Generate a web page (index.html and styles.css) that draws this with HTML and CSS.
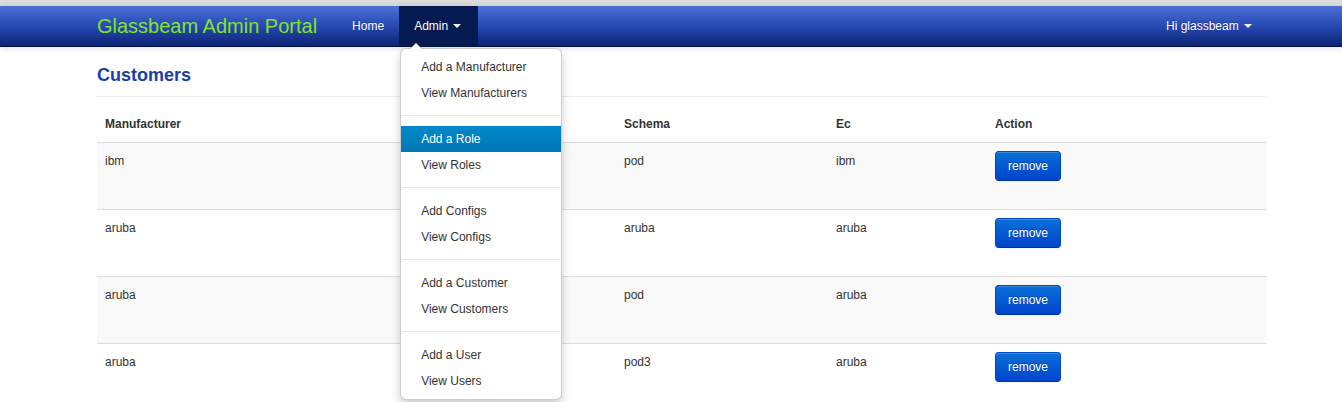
FILE: index.html
```html
<!DOCTYPE html>
<html>
<head>
<meta charset="utf-8">
<title>Glassbeam Admin Portal</title>
<link rel="stylesheet" href="styles.css">
</head>
<body>
<div class="topstrip"></div>
<div class="navbar">
  <div class="container nav-inner">
    <a class="brand">Glassbeam Admin Portal</a>
    <ul class="nav">
      <li><a>Home</a></li>
      <li class="dropdown open">
        <a class="active">Admin <b class="caret"></b></a>
        <ul class="dropdown-menu">
          <li><a>Add a Manufacturer</a></li>
          <li><a>View Manufacturers</a></li>
          <li class="divider"></li>
          <li><a class="hl">Add a Role</a></li>
          <li><a>View Roles</a></li>
          <li class="divider"></li>
          <li><a>Add Configs</a></li>
          <li><a>View Configs</a></li>
          <li class="divider"></li>
          <li><a>Add a Customer</a></li>
          <li><a>View Customers</a></li>
          <li class="divider"></li>
          <li><a>Add a User</a></li>
          <li><a>View Users</a></li>
        </ul>
      </li>
    </ul>
    <ul class="nav nav-right">
      <li><a>Hi glassbeam <b class="caret"></b></a></li>
    </ul>
  </div>
</div>
<div class="container">
  <div class="page-header"><h3>Customers</h3></div>
  <table class="table">
    <colgroup>
      <col class="c1"><col class="c2"><col class="c3"><col class="c4"><col class="c5">
    </colgroup>
    <thead>
      <tr><th>Manufacturer</th><th></th><th>Schema</th><th>Ec</th><th>Action</th></tr>
    </thead>
    <tbody>
      <tr class="odd"><td>ibm</td><td></td><td>pod</td><td>ibm</td><td><form class="f"><button type="button" class="btn">remove</button></form></td></tr>
      <tr><td>aruba</td><td></td><td>aruba</td><td>aruba</td><td><form class="f"><button type="button" class="btn">remove</button></form></td></tr>
      <tr class="odd"><td>aruba</td><td></td><td>pod</td><td>aruba</td><td><form class="f"><button type="button" class="btn">remove</button></form></td></tr>
      <tr><td>aruba</td><td></td><td>pod3</td><td>aruba</td><td><form class="f"><button type="button" class="btn">remove</button></form></td></tr>
    </tbody>
  </table>
</div>
</body>
</html>
```
FILE: styles.css
```css
html, body {
  margin: 0;
  padding: 0;
  background: #fff;
  font-family: "Liberation Sans", Arial, sans-serif;
  font-size: 12px;
  line-height: 20px;
  color: #333;
  overflow: hidden;
}
.topstrip {
  height: 6px;
  background: #dcdcdc;
}
.container {
  width: 1170px;
  margin-left: 97px;
}
.navbar {
  background: linear-gradient(to bottom, #4a70d6 0%, #2749b2 50%, #0c2474 100%);
  box-shadow: 0 1px 6px rgba(0,0,0,0.15);
  border-bottom: 1px solid #061445;
  box-sizing: border-box;
  height: 41px;
  position: relative;
  z-index: 5;
}
.nav-inner {
  display: flex;
  height: 40px;
}
.brand {
  display: block;
  font-size: 20px;
  line-height: 20px;
  padding: 10px 20px 10px 0;
  color: #84e32c;
}
.nav {
  list-style: none;
  margin: 0;
  padding: 0;
  display: flex;
}
.nav > li {
  position: relative;
}
.nav > li > a {
  display: block;
  padding: 10px 15px;
  line-height: 20px;
  color: #fff;
  text-shadow: 0 -1px 0 rgba(0,0,0,0.25);
}
.nav > li > a.active {
  background: #061a52;
  padding-right: 17px;
}
.nav-right {
  margin-left: auto;
}
.caret {
  display: inline-block;
  width: 0;
  height: 0;
  vertical-align: top;
  margin-top: 8px;
  margin-left: 2px;
  border-top: 4px solid #fff;
  border-left: 4px solid transparent;
  border-right: 4px solid transparent;
}
.dropdown-menu {
  position: absolute;
  top: 100%;
  left: 1px;
  margin: 2px 0 0;
  padding: 5px 0;
  list-style: none;
  width: 160px;
  background: #fff;
  border: 1px solid rgba(0,0,0,0.2);
  border-radius: 6px;
  box-shadow: 0 5px 10px rgba(0,0,0,0.2);
  z-index: 10;
}
.dropdown-menu:before {
  content: "";
  position: absolute;
  top: -7px;
  left: 8px;
  border-left: 7px solid transparent;
  border-right: 7px solid transparent;
  border-bottom: 7px solid rgba(0,0,0,0.2);
}
.dropdown-menu:after {
  content: "";
  position: absolute;
  top: -6px;
  left: 9px;
  border-left: 6px solid transparent;
  border-right: 6px solid transparent;
  border-bottom: 6px solid #fff;
}
.dropdown-menu li a {
  display: block;
  padding: 3px 20px;
  line-height: 20px;
  color: #333;
  white-space: nowrap;
}
.dropdown-menu li a.hl {
  color: #fff;
  background: linear-gradient(to bottom, #0088cc, #0077b3);
}
.dropdown-menu .divider {
  height: 1px;
  margin: 9px 1px;
  background: #e5e5e5;
  border-bottom: 1px solid #fff;
}
.page-header {
  margin-top: 18px;
  padding-bottom: 11px;
  border-bottom: 1px solid #eee;
}
.page-header h3 {
  margin: 0;
  font-size: 18px;
  line-height: 20px;
  font-weight: bold;
  color: #1b3ea6;
}
.table {
  margin-top: 9px;
  width: 1170px;
  table-layout: fixed;
  border-collapse: collapse;
  border-spacing: 0;
}
.c1 { width: 310px; }
.c2 { width: 209px; }
.c3 { width: 212px; }
.c4 { width: 159px; }
.c5 { width: 280px; }
.table th, .table td {
  padding: 8px;
  line-height: 20px;
  text-align: left;
  vertical-align: top;
}
.table th {
  font-weight: bold;
  vertical-align: bottom;
}
.table td {
  border-top: 1px solid #ddd;
}
.table tr.odd td {
  background: #f9f9f9;
}
.f {
  margin: 0 0 20px;
}
.btn {
  display: inline-block;
  margin: 0;
  padding: 4px 12px;
  font-family: "Liberation Sans", Arial, sans-serif;
  font-size: 12px;
  line-height: 20px;
  color: #fff;
  text-shadow: 0 -1px 0 rgba(0,0,0,0.25);
  background: linear-gradient(to bottom, #0a6fd8, #0044cc);
  border: 1px solid #0048c0;
  border-bottom-color: #00379a;
  border-radius: 4px;
  box-shadow: inset 0 1px 0 rgba(255,255,255,0.2), 0 1px 2px rgba(0,0,0,0.05);
}
```
